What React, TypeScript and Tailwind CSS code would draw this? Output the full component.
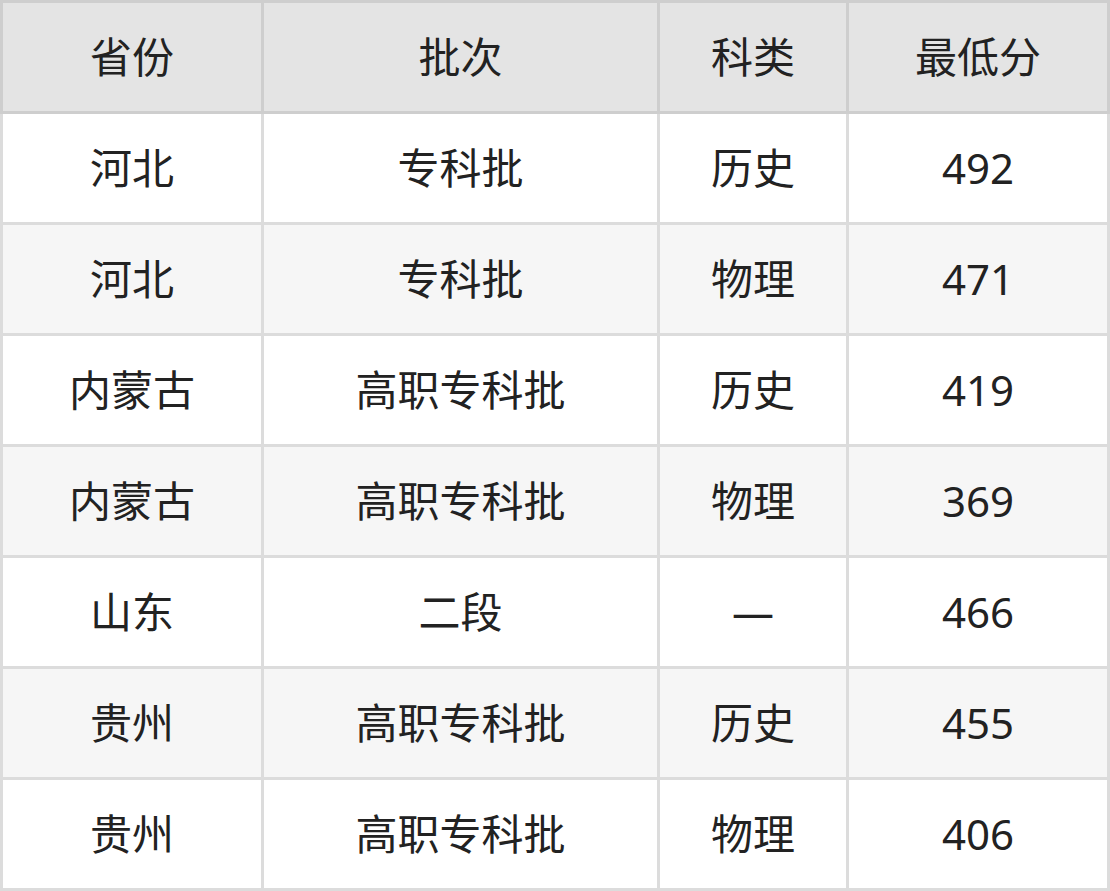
const rows: [string, string, string, string][] = [
  ["河北", "专科批", "历史", "492"],
  ["河北", "专科批", "物理", "471"],
  ["内蒙古", "高职专科批", "历史", "419"],
  ["内蒙古", "高职专科批", "物理", "369"],
  ["山东", "二段", "—", "466"],
  ["贵州", "高职专科批", "历史", "455"],
  ["贵州", "高职专科批", "物理", "406"],
];

const cols = "grid grid-cols-[258px_393px_186px_258px] gap-x-[3px]";
const cell = "flex h-[108px] items-center justify-center";

export default function App() {
  return (
    <div
      className="w-[1110px] text-[42px] leading-none text-[#222222]"
      style={{ fontFamily: '"Noto Sans", "Noto Sans CJK SC", sans-serif' }}
    >
      <div className={`${cols} bg-[#cecece] p-[3px]`}>
        {["省份", "批次", "科类", "最低分"].map((h) => (
          <div key={h} className={`${cell} bg-[#e4e4e4]`}>
            {h}
          </div>
        ))}
      </div>
      {rows.map((r, i) => (
        <div key={i} className={`${cols} bg-[#dcdcdc] px-[3px] pb-[3px]`}>
          {r.map((c, j) => (
            <div
              key={j}
              className={`${cell} ${i % 2 === 0 ? "bg-white" : "bg-[#f6f6f6]"}`}
            >
              {c}
            </div>
          ))}
        </div>
      ))}
    </div>
  );
}
